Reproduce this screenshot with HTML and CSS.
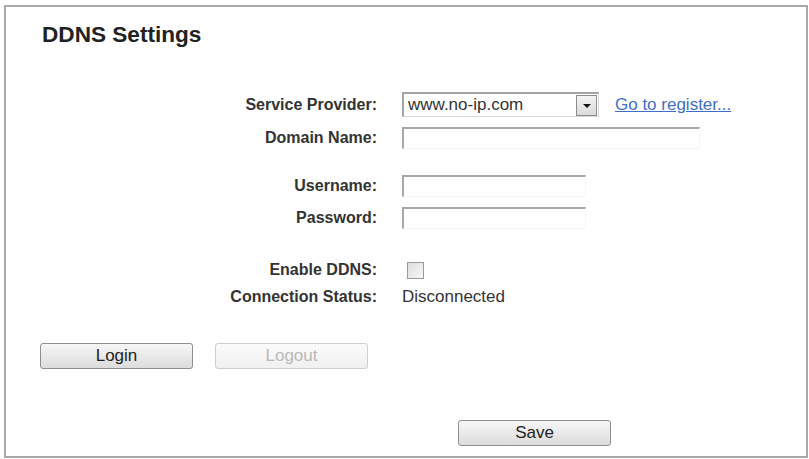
FILE: index.html
```html
<!DOCTYPE html>
<html lang="en">
<head>
    <meta charset="UTF-8">
    <title>DDNS Settings</title>
    <link rel="stylesheet" href="styles.css">
</head>
<body>
<div class="frame">
    <h1 class="title">DDNS Settings</h1>
    <form class="ddns-form">
        <div class="row row-provider">
            <label class="label">Service Provider:</label>
            <div class="field">
                <div class="select">
                    <span class="select-value">www.no-ip.com</span>
                    <span class="select-arrow"></span>
                </div>
                <a href="#" class="register">Go to register...</a>
            </div>
        </div>
        <div class="row row-domain">
            <label class="label" for="inp-domain">Domain Name:</label>
            <div class="field"><input type="text" id="inp-domain" class="text-input wide"></div>
        </div>
        <div class="row row-user">
            <label class="label" for="inp-user">Username:</label>
            <div class="field"><input type="text" id="inp-user" class="text-input"></div>
        </div>
        <div class="row row-pass">
            <label class="label" for="inp-pass">Password:</label>
            <div class="field"><input type="password" id="inp-pass" class="text-input"></div>
        </div>
        <div class="row row-enable">
            <label class="label" for="chk-enable">Enable DDNS:</label>
            <div class="field"><input type="checkbox" id="chk-enable" class="check"></div>
        </div>
        <div class="row row-status">
            <span class="label">Connection Status:</span>
            <div class="field"><span class="status">Disconnected</span></div>
        </div>
        <div class="actions">
            <button type="button" class="btn">Login</button>
            <button type="button" class="btn" disabled>Logout</button>
        </div>
        <div class="save-bar">
            <button type="button" class="btn">Save</button>
        </div>
    </form>
</div>
</body>
</html>
```

FILE: styles.css
```css
body{
    margin: 0;
    background-color: white;
    font-family: "Liberation Sans", Arial, sans-serif;
    color: #2e2e2e;
}
.frame{
    margin: 5px 1px 1px 4px;
    height: 449px;
    border: 2px solid #a9a9a9;
    background-color: white;
}
.title{
    margin: 15px 0 0 36px;
    font-size: 22.6px;
    line-height: 25px;
    font-weight: bold;
    color: #222;
}
.ddns-form{
    margin: 0;
}
.row{
    display: flex;
    align-items: center;
}
.label{
    width: 371px;
    flex: none;
    text-align: right;
    font-size: 16px;
    font-weight: bold;
    color: #333;
}
.field{
    margin-left: 25px;
    display: flex;
    align-items: center;
}
.row-provider{ margin-top: 45px; height: 25px; }
.row-domain{ margin-top: 9px; height: 24px; }
.row-user{ margin-top: 25px; height: 22px; }
.row-pass{ margin-top: 10px; height: 22px; }
.row-enable{ margin-top: 32px; height: 18px; }
.row-status{ margin-top: 9px; height: 18px; }

.select{
    box-sizing: border-box;
    width: 197px;
    height: 25px;
    display: flex;
    align-items: center;
    justify-content: space-between;
    border-top: 2px solid #a4a4a4;
    border-left: 2px solid #a4a4a4;
    border-right: 1px solid #d8d8d8;
    border-bottom: 1px solid #d8d8d8;
}
.select-value{
    padding-left: 4px;
    font-size: 17px;
    color: #333;
}
.select-arrow{
    box-sizing: border-box;
    position: relative;
    width: 21px;
    height: 21px;
    margin-right: 1px;
    border: 1px solid #8c8c8c;
    background: linear-gradient(#f4f4f4, #dadada);
}
.select-arrow::after{
    content: "";
    position: absolute;
    left: 6px;
    top: 8px;
    border-left: 4px solid transparent;
    border-right: 4px solid transparent;
    border-top: 4px solid #111;
}
.register{
    margin-left: 16px;
    font-size: 17px;
    color: #3f6fc6;
    text-decoration: underline;
}
.text-input{
    box-sizing: border-box;
    width: 184px;
    height: 22px;
    margin: 0;
    padding: 0 3px;
    border-top: 2px solid #a8a8a8;
    border-left: 2px solid #a8a8a8;
    border-right: 1px solid #f6f6f6;
    border-bottom: 1px solid #f6f6f6;
    font: 16px "Liberation Sans", Arial, sans-serif;
    outline: none;
}
.text-input.wide{
    width: 298px;
}
.check{
    appearance: none;
    box-sizing: border-box;
    width: 17px;
    height: 17px;
    margin: 0 0 0 5px;
    border: 1px solid #9a9a9a;
    background: linear-gradient(135deg, #dcdcdc, #f8f8f8);
}
.status{
    font-size: 17px;
    color: #333;
}
.actions{
    display: flex;
    gap: 22px;
    margin: 37px 0 0 34px;
}
.btn{
    box-sizing: border-box;
    width: 153px;
    height: 26px;
    margin: 0;
    padding: 0;
    border: 1px solid #8f8f8f;
    border-radius: 3px;
    background: linear-gradient(#f7f7f7, #dcdcdc);
    font: 17px "Liberation Sans", Arial, sans-serif;
    color: #222;
    cursor: pointer;
}
.btn:disabled{
    border-color: #cfcfcf;
    background: linear-gradient(#fbfbfb, #f0f0f0);
    color: #b8b8b8;
    cursor: default;
}
.save-bar{
    margin: 51px 0 0 452px;
}
```
